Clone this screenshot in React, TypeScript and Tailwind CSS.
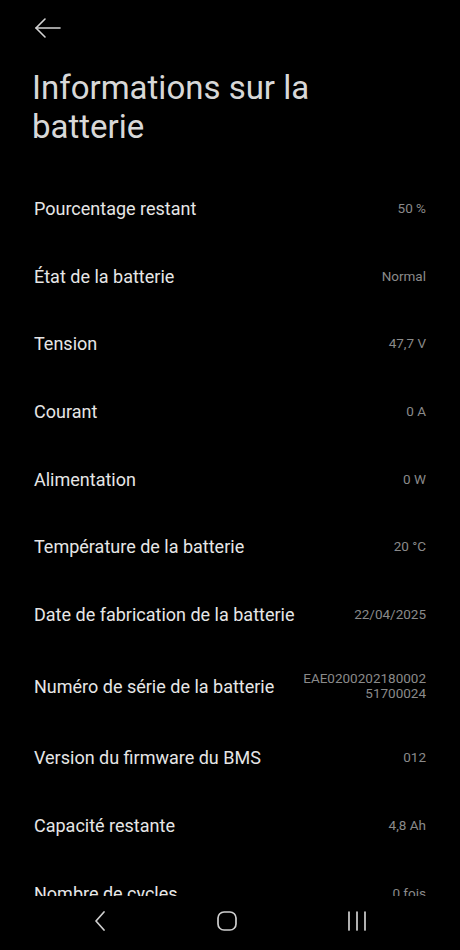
import React from "react";

const rows: { label: string; value: string[] }[] = [
  { label: "Pourcentage restant", value: ["50 %"] },
  { label: "État de la batterie", value: ["Normal"] },
  { label: "Tension", value: ["47,7 V"] },
  { label: "Courant", value: ["0 A"] },
  { label: "Alimentation", value: ["0 W"] },
  { label: "Température de la batterie", value: ["20 °C"] },
  { label: "Date de fabrication de la batterie", value: ["22/04/2025"] },
  { label: "Numéro de série de la batterie", value: ["EAE0200202180002", "51700024"] },
  { label: "Version du firmware du BMS", value: ["012"] },
  { label: "Capacité restante", value: ["4,8 Ah"] },
  { label: "Nombre de cycles", value: ["0 fois"] },
];

export default function App() {
  return (
    <div
      className="relative h-[950px] w-full overflow-hidden bg-black"
      style={{ fontFamily: "Roboto, 'Liberation Sans', sans-serif" }}
    >
      <header className="h-[56px] pl-[34px] pt-[16px]">
        <svg width="28" height="24" viewBox="0 0 28 24" fill="none" stroke="#d4d4d4" strokeWidth="1.6" strokeLinecap="round" strokeLinejoin="round">
          <path d="M2 12h24" />
          <path d="M11 3 2 12l9 9" />
        </svg>
      </header>

      <h1 className="mt-[12px] pl-[32px] pr-6 text-[33px] leading-[39px] text-[#d8d8d8]">
        Informations sur la
        <br />
        batterie
      </h1>

      <ul className="mt-[29px]">
        {rows.map((r) => (
          <li
            key={r.label}
            className={`flex items-center justify-between gap-4 pl-[34px] pr-[34px] ${r.value.length > 1 ? "h-[76px]" : "h-[67.6px]"}`}
          >
            <span className="text-[18px] text-[#e6e6e6]">{r.label}</span>
            <span className="text-right text-[13.5px] leading-[15px] text-[#8a8a8a]">
              {r.value.map((v) => (
                <span key={v} className="block">
                  {v}
                </span>
              ))}
            </span>
          </li>
        ))}
      </ul>

      <nav className="absolute bottom-0 left-0 right-0 flex h-[54px] items-center bg-black pb-[4px]">
        <div className="flex w-full items-center justify-between px-[92px]">
          <svg width="16" height="22" viewBox="0 0 16 22" fill="none" stroke="#cfcfcf" strokeWidth="1.7" strokeLinecap="round" strokeLinejoin="round">
            <path d="M12 2 4 11l8 9" />
          </svg>
          <svg width="22" height="22" viewBox="0 0 22 22" fill="none" stroke="#cfcfcf" strokeWidth="1.7">
            <rect x="2" y="2" width="18" height="18" rx="6" />
          </svg>
          <svg width="22" height="22" viewBox="0 0 22 22" fill="none" stroke="#cfcfcf" strokeWidth="1.7" strokeLinecap="round">
            <path d="M3 2v18M11 2v18M19 2v18" />
          </svg>
        </div>
      </nav>
    </div>
  );
}
